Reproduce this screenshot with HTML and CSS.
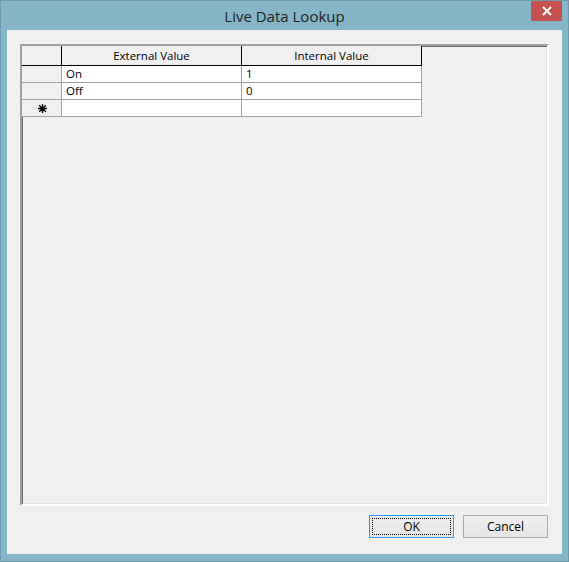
FILE: index.html
```html
<!DOCTYPE html>
<html>
<head>
<meta charset="utf-8">
<link rel="stylesheet" href="styles.css">
</head>
<body>
<div class="window">
  <div class="titlebar">
    <div class="spacer"></div>
    <div class="title">Live Data Lookup</div>
    <div class="controls">
      <div class="close">
        <svg width="10" height="10" viewBox="0 0 10 10"><path d="M1 1 L9 9 M9 1 L1 9" stroke="#fff" stroke-width="2" fill="none"/></svg>
      </div>
    </div>
  </div>
  <div class="client">
    <div class="panel">
      <div class="grid">
        <div class="hcell corner"></div>
        <div class="hcell">External Value</div>
        <div class="hcell">Internal Value</div>

        <div class="rhead"></div>
        <div class="cell">On</div>
        <div class="cell">1</div>

        <div class="rhead"></div>
        <div class="cell">Off</div>
        <div class="cell">0</div>

        <div class="rhead newrow">
          <svg width="9" height="9" viewBox="0 0 9 9"><path d="M4.5 0 V9 M0 4.5 H9 M1.2 1.2 L7.8 7.8 M7.8 1.2 L1.2 7.8" stroke="#000" stroke-width="1.3" fill="none"/></svg>
        </div>
        <div class="cell"></div>
        <div class="cell"></div>
      </div>
    </div>
    <div class="buttons">
      <button class="btn default"><span class="focus">OK</span></button>
      <button class="btn">Cancel</button>
    </div>
  </div>
</div>
</body>
</html>
```

FILE: styles.css
```css
html, body {
  margin: 0;
  padding: 0;
}
body {
  font-family: "Open Sans", "Noto Sans", sans-serif;
  font-size: 11px;
  color: #000;
}
.window {
  box-sizing: border-box;
  width: 569px;
  height: 562px;
  border: 1px solid #6e9aaa;
  background: #85b5c6;
  display: flex;
  flex-direction: column;
}
.titlebar {
  height: 29px;
  display: grid;
  grid-template-columns: 1fr auto 1fr;
  align-items: start;
}
.title {
  font-size: 15px;
  color: #222;
  line-height: 30px;
}
.controls {
  display: flex;
  justify-content: flex-end;
  padding-right: 6px;
}
.close {
  width: 31px;
  height: 20px;
  background: #c75050;
  display: flex;
  align-items: center;
  justify-content: center;
}
.close svg {
  display: block;
}
.client {
  flex: 1;
  margin: 0 6px 7px 6px;
  background: #f0f0f0;
  padding: 14px 13px 16px 13px;
  display: flex;
  flex-direction: column;
}
.panel {
  height: 462px;
  box-sizing: border-box;
  border-style: solid;
  border-width: 2px;
  border-color: #a0a0a0 #ffffff #ffffff #a0a0a0;
  box-shadow: inset 1px 1px 0 #696969, inset -1px -1px 0 #e3e3e3;
  background: #f0f0f0;
  padding: 0;
}
.grid {
  display: grid;
  grid-template-columns: 40px 180px 180px;
  grid-auto-rows: 17px;
  grid-template-rows: 20px;
  width: 400px;
}
.grid > div {
  box-sizing: border-box;
  white-space: nowrap;
  overflow: hidden;
}
.hcell {
  background: #f0f0f0;
  border-right: 1px solid #000;
  border-bottom: 1px solid #000;
  display: flex;
  align-items: center;
  justify-content: center;
  font-size: 11.5px;
}
.rhead {
  background: #f0f0f0;
  border-right: 1px solid #a0a0a0;
  border-bottom: 1px solid #a0a0a0;
}
.newrow {
  display: flex;
  align-items: center;
  justify-content: center;
  padding-left: 1px;
}
.newrow svg {
  display: block;
}
.cell {
  background: #fff;
  border-right: 1px solid #a0a0a0;
  border-bottom: 1px solid #a0a0a0;
  padding-left: 4px;
  line-height: 16px;
  font-size: 11.5px;
}
.buttons {
  margin-top: 9px;
  margin-right: 1px;
  display: flex;
  justify-content: flex-end;
  gap: 9px;
}
.btn {
  box-sizing: border-box;
  width: 85px;
  height: 23px;
  font-family: "Open Sans", "Noto Sans", sans-serif;
  font-size: 12px;
  color: #000;
  background: linear-gradient(#f0f0f0, #e5e5e5);
  border: 1px solid #acacac;
  padding: 0;
  margin: 0;
  display: flex;
  align-items: center;
  justify-content: center;
}
.btn.default {
  border-color: #3399ff;
  padding: 2px;
}
.focus {
  box-sizing: border-box;
  width: 100%;
  height: 100%;
  border: 1px dotted #000;
  display: flex;
  align-items: center;
  justify-content: center;
}
```
